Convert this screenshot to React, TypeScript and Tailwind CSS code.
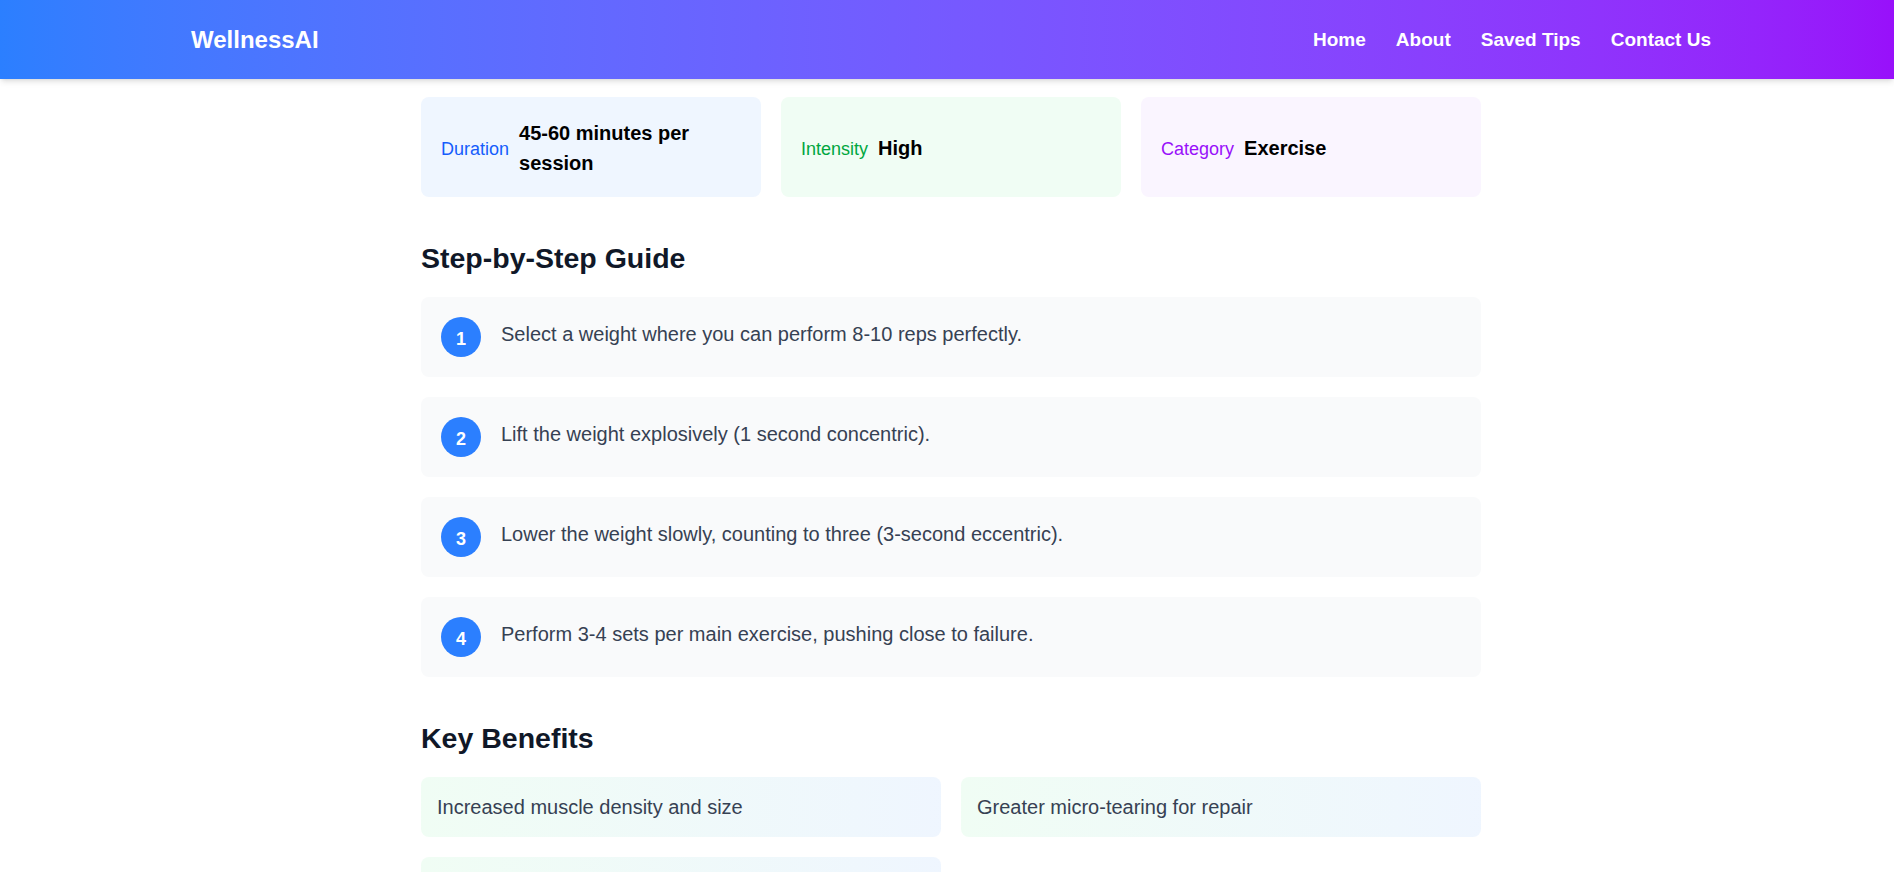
import React from "react";

const navLinks = ["Home", "About", "Saved Tips", "Contact Us"];

const stats = [
  { label: "Duration", value: "45-60 minutes per session", box: "bg-blue-50", tone: "text-blue-600" },
  { label: "Intensity", value: "High", box: "bg-green-50", tone: "text-green-600" },
  { label: "Category", value: "Exercise", box: "bg-purple-50", tone: "text-purple-600" },
];

const steps = [
  "Select a weight where you can perform 8-10 reps perfectly.",
  "Lift the weight explosively (1 second concentric).",
  "Lower the weight slowly, counting to three (3-second eccentric).",
  "Perform 3-4 sets per main exercise, pushing close to failure.",
];

const benefits = [
  "Increased muscle density and size",
  "Greater micro-tearing for repair",
  "Improved control and joint stability",
];

const Header: React.FC = () => (
  <header className="bg-linear-to-r from-blue-500 to-purple-600 shadow-md">
    <div className="pl-2">
      <div className="mx-auto flex h-[79px] w-[1520px] items-center justify-between">
        <span className="text-2xl font-bold text-white">WellnessAI</span>
        <nav className="flex items-center gap-[30px] pt-[2px]">
          {navLinks.map((link) => (
            <a key={link} href="#" className="text-[19px] font-bold text-white">
              {link}
            </a>
          ))}
        </nav>
      </div>
    </div>
  </header>
);

const SectionTitle: React.FC<{ children: React.ReactNode }> = ({ children }) => (
  <h2 className="mb-[21px] pt-[3px] text-[28.5px] leading-9 font-bold text-gray-900">{children}</h2>
);

const App: React.FC = () => {
  return (
    <div className="min-h-screen bg-white font-['Liberation_Sans',Arial,sans-serif]">
      <Header />

      <main className="pl-2 pt-[18px] pb-10">
        <div className="mx-auto max-w-[1060px]">
          <div className="grid grid-cols-3 gap-5">
            {stats.map((s) => (
              <div
                key={s.label}
                className={`flex items-center gap-2.5 rounded-lg px-5 pt-[21px] pb-[19px] ${s.box}`}
              >
                <span className={`pt-[2px] text-lg ${s.tone}`}>{s.label}</span>
                <span className="text-xl leading-[30px] font-bold text-black">{s.value}</span>
              </div>
            ))}
          </div>

          <section className="mt-10">
            <SectionTitle>Step-by-Step Guide</SectionTitle>
            <div className="flex flex-col gap-5">
              {steps.map((step, i) => (
                <div key={i} className="flex items-center gap-5 rounded-lg bg-gray-50 p-5">
                  <span className="flex h-10 w-10 shrink-0 items-center justify-center rounded-full bg-blue-500 pt-1 text-lg font-bold text-white">
                    {i + 1}
                  </span>
                  <p className="mb-1.5 text-xl text-gray-700">{step}</p>
                </div>
              ))}
            </div>
          </section>

          <section className="mt-10">
            <SectionTitle>Key Benefits</SectionTitle>
            <div className="grid grid-cols-2 gap-5">
              {benefits.map((b) => (
                <div key={b} className="rounded-lg bg-linear-to-r from-green-50 to-blue-50 p-4">
                  <p className="text-xl text-gray-700">{b}</p>
                </div>
              ))}
            </div>
          </section>
        </div>
      </main>
    </div>
  );
};

export default App;
